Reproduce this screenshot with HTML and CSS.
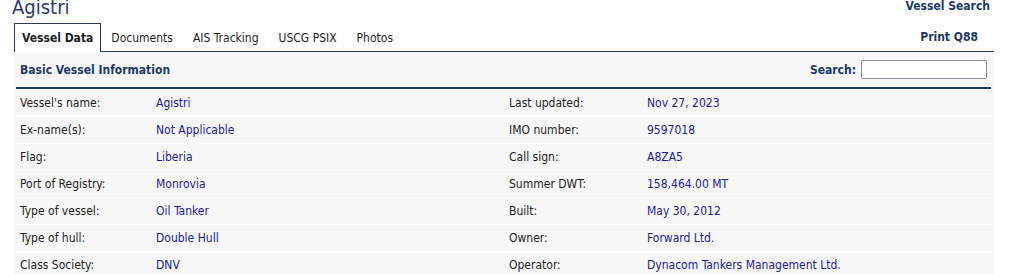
FILE: index.html
```html
<!DOCTYPE html>
<html>
<head>
<meta charset="utf-8">
<link rel="stylesheet" href="styles.css">
</head>
<body>
<div class="top">
  <h1 class="title">Agistri</h1>
  <a class="navlink" href="#">Vessel Search</a>
</div>
<div class="tabbar">
  <ul class="tabs">
    <li class="tab active">Vessel Data</li>
    <li class="tab">Documents</li>
    <li class="tab">AIS Tracking</li>
    <li class="tab">USCG PSIX</li>
    <li class="tab">Photos</li>
  </ul>
  <a class="navlink print" href="#">Print Q88</a>
</div>
<div class="panel">
  <div class="panel-head">
    <span class="panel-title">Basic Vessel Information</span>
    <label class="search">Search: <input type="text" class="search-input"></label>
  </div>
  <div class="row">
    <span class="lbl">Vessel's name:</span><span class="val">Agistri</span>
    <span class="lbl">Last updated:</span><span class="val">Nov 27, 2023</span>
  </div>
  <div class="row">
    <span class="lbl">Ex-name(s):</span><span class="val">Not Applicable</span>
    <span class="lbl">IMO number:</span><span class="val">9597018</span>
  </div>
  <div class="row">
    <span class="lbl">Flag:</span><span class="val">Liberia</span>
    <span class="lbl">Call sign:</span><span class="val">A8ZA5</span>
  </div>
  <div class="row">
    <span class="lbl">Port of Registry:</span><span class="val">Monrovia</span>
    <span class="lbl">Summer DWT:</span><span class="val">158,464.00 MT</span>
  </div>
  <div class="row">
    <span class="lbl">Type of vessel:</span><span class="val">Oil Tanker</span>
    <span class="lbl">Built:</span><span class="val">May 30, 2012</span>
  </div>
  <div class="row">
    <span class="lbl">Type of hull:</span><span class="val">Double Hull</span>
    <span class="lbl">Owner:</span><span class="val">Forward Ltd.</span>
  </div>
  <div class="row">
    <span class="lbl">Class Society:</span><span class="val">DNV</span>
    <span class="lbl">Operator:</span><span class="val">Dynacom Tankers Management Ltd.</span>
  </div>
</div>
</body>
</html>
```
FILE: styles.css
```css
html, body {
  margin: 0;
  padding: 0;
  background: #ffffff;
}
body {
  font-family: "DejaVu Sans Condensed", "DejaVu Sans", sans-serif;
  font-size: 12px;
  color: #1e1e1e;
}
.top {
  display: flex;
  justify-content: space-between;
  align-items: flex-start;
  height: 23px;
  padding: 0 27px 0 12px;
}
.title {
  margin: -4px 0 0 0;
  font-size: 20px;
  line-height: 22px;
  font-weight: normal;
  color: #2a3d6c;
}
.navlink {
  font-weight: bold;
  color: #1b3a6a;
  text-decoration: none;
  line-height: 12px;
}
.tabbar {
  display: flex;
  justify-content: space-between;
  align-items: flex-end;
  margin-left: 14px;
  width: 980px;
  height: 28px;
  border-bottom: 1px solid #2b3a5e;
}
.tabs {
  display: flex;
  margin: 0;
  padding: 0;
  list-style: none;
}
.tab {
  padding: 0 9px;
  height: 28px;
  line-height: 28px;
  border: 1px solid transparent;
  border-bottom: none;
  margin-bottom: -1px;
}
.tab.active {
  font-weight: bold;
  border-color: #2b3a5e;
  background: #ffffff;
  height: 28px;
  padding: 0 7px;
}
.print {
  margin-right: 16px;
  line-height: 28px;
}
.panel {
  margin-left: 14px;
  width: 980px;
  background: #f7f7f7;
}
.panel-head {
  display: flex;
  justify-content: space-between;
  align-items: center;
  height: 35px;
  margin: 0 3px 0 2px;
  padding: 0 4px;
  border-bottom: 2px solid #173a6b;
}
.panel-title {
  font-weight: bold;
  color: #1b3a6a;
}
.search {
  font-weight: bold;
  color: #1b3a6a;
  display: flex;
  align-items: center;
  gap: 5px;
}
.search-input {
  width: 122px;
  height: 15px;
  margin: 0;
  padding: 1px;
  border: 1px solid #8c8c98;
  border-radius: 2px;
  background: #ffffff;
}
.row {
  display: grid;
  grid-template-columns: 136px 353px 138px 1fr;
  padding-left: 6px;
  height: 26px;
  line-height: 26px;
  border-top: 1px solid #fdfdfd;
}
.val {
  color: #1c1ca0;
}
```
